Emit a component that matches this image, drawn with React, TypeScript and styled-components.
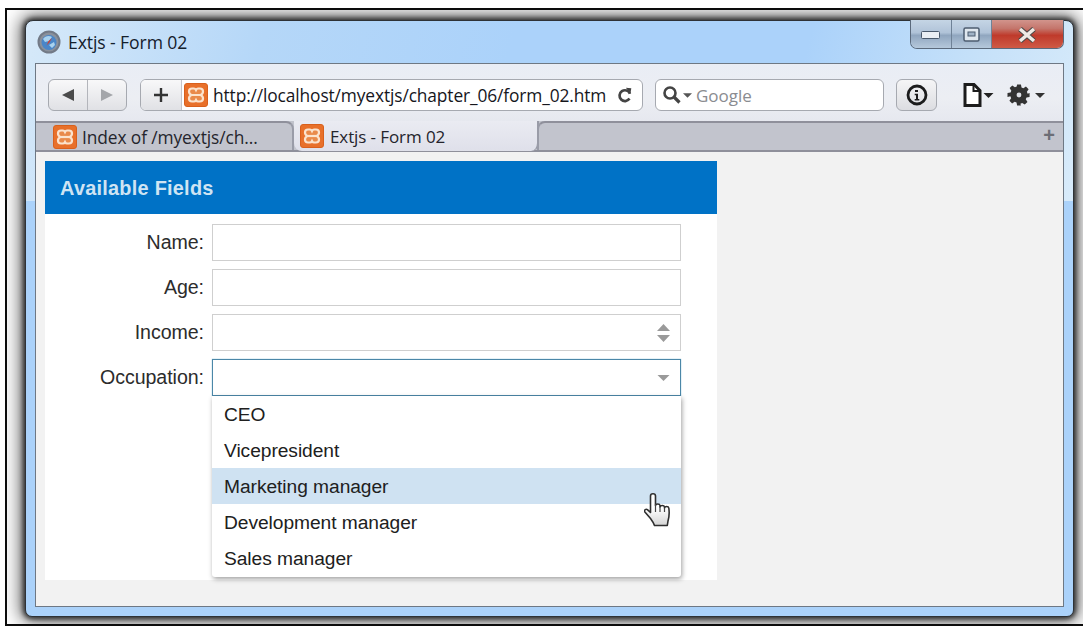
import React from 'react';
import styled, { createGlobalStyle } from 'styled-components';

const Global = createGlobalStyle`
  html, body { margin: 0; padding: 0; background: #fff; width: 1091px; height: 634px; overflow: hidden; }
  * { box-sizing: border-box; }
`;

const Shot = styled.div`
  width: 1091px; height: 634px; padding: 8px 8px 8px 5px; background: #fff;
`;
const Frame = styled.div`
  position: relative; width: 1078px; height: 618px; overflow: hidden;
  border: solid #0c0c0c; border-width: 2px 0 2px 2px;
  background: #fff;
  padding: 10px 10px 7px 18px;
`;
const Win = styled.div`
  width: 1049px; height: 597px; display: flex; flex-direction: column;
  border: 1px solid #2e3236; border-radius: 8px 8px 7px 7px;
  background: linear-gradient(105deg,#d6e9f9 0,#b5d7f8 22%,#abd2fa 45%,#abd2fa 72%,#c6e1f9 88%,#d8ebfa 100%) 0 0 / 100% 180px no-repeat, #abd2fa;
  box-shadow: 0 0 5px 2px rgba(20,20,20,.8), 0 0 18px 5px rgba(0,0,0,.6);
  padding: 0 9px 9px 9px;
`;
const TitleBar = styled.div`
  position: relative; height: 42px; flex: none; display: flex; align-items: center; gap: 7px; padding: 0 0 0 2px;
  font: 17.6px "Open Sans", sans-serif; color: #14202c; letter-spacing: -.1px;
`;
const Caption = styled.div`
  position: absolute; right: 0; top: -1px; height: 29px; width: 154px; display: flex;
  border: 1px solid #5b6a7c; border-top: 0; border-radius: 0 0 7px 7px; overflow: hidden;
`;
const CapBtn = styled.div<{ $w: number; $red?: boolean }>`
  width: ${p => p.$w}px; display: flex; align-items: center; justify-content: center; padding-top: 1px;
  border-right: 1px solid #6f8297;
  background: ${p => p.$red
    ? 'linear-gradient(#d2948c 0,#c4766c 30%,#bf3a2b 55%,#cf5a45 100%)'
    : 'linear-gradient(#c5d5e5 0,#b0c3d8 45%,#90a6bf 55%,#b5c8db 100%)'};
  &:last-child { border-right: 0; }
`;
const Inner = styled.div`
  flex: 1; display: flex; flex-direction: column; min-height: 0; border: 1px solid #6e7884; background: #f2f2f2;
`;
const Toolbar = styled.div`
  height: 57px; flex: none; display: flex; align-items: center; padding: 5px 0 0 12px;
  background: linear-gradient(#e9edf5,#eceef3 60%,#e6e8ef);
`;
const Seg = styled.div`
  height: 32px; display: flex; flex: none; border: 1px solid #a6a9b0; border-radius: 6px; overflow: hidden;
  background: linear-gradient(#f8f8f9,#e0e1e5);
`;
const NavCell = styled.div<{ $w: number }>`
  width: ${p => p.$w}px; display: flex; align-items: center; justify-content: center;
  border-right: 1px solid #b3b5bb; &:last-child { border-right: 0; }
`;
const UrlBar = styled.div`
  margin-left: 13px; width: 503px; height: 32px; flex: none; display: flex; align-items: center;
  border: 1px solid #a6a9b0; border-radius: 6px; overflow: hidden; background: #fff;
`;
const PlusCell = styled.div`
  width: 41px; height: 100%; display: flex; align-items: center; justify-content: center; flex: none;
  background: linear-gradient(#f8f8f9,#e0e1e5); border-right: 1px solid #c4c6cb;
`;
const LogoSlot = styled.span`
  margin-left: 2px; display: flex;
`;
const UrlText = styled.span`
  margin-left: 5px; flex: 1; font: 17.35px "Open Sans", sans-serif; color: #16161c; white-space: nowrap; letter-spacing: -.12px;
`;
const Search = styled.div`
  margin-left: 12px; width: 229px; height: 32px; flex: none; display: flex; align-items: center; padding-left: 6px;
  border: 1px solid #a6a9b0; border-radius: 6px; background: #fff;
  font: 17px "Open Sans", sans-serif; color: #8a8c90;
`;
const SearchCaret = styled.span`
  margin: 0 4px 0 1px; display: flex;
`;
const InfoBtn = styled.div`
  margin-left: 12px; width: 41px; height: 32px; flex: none; display: flex; align-items: center; justify-content: center;
  border: 1px solid #a6a9b0; border-radius: 6px; background: linear-gradient(#f5f5f6,#dcdde1);
`;
const ToolIcons = styled.div`
  margin-left: 26px; display: flex; align-items: center; gap: 13px;
`;
const ToolGroup = styled.span<{ $gap: number }>`
  display: flex; align-items: center; gap: ${p => p.$gap}px;
`;
const TabStrip = styled.div`
  height: 31px; flex: none; display: flex; background: #c2c4cd; border-bottom: 2px solid #8f909b; position: relative;
`;
const Tab = styled.div<{ $active?: boolean; $w: number }>`
  width: ${p => p.$w}px; flex: none; display: flex; align-items: center; gap: ${p => p.$active ? 6 : 5}px; padding: 0 0 0 ${p => p.$active ? 6 : 17}px;
  font: ${p => p.$active ? 17 : 17.35}px "Open Sans", sans-serif; color: #24242c; white-space: nowrap; letter-spacing: -.1px;
  ${p => p.$active
    ? 'background: linear-gradient(#eaebf2,#dfe0ea); margin-bottom: -1px; border-right: 2px solid #9a9ca8; border-radius: 0 0 8px 8px;'
    : 'background: #c2c4cd; border-top: 2px solid #8f909b; border-right: 2px solid #9a9ca8; border-top-right-radius: 8px;'}
`;
const TabRest = styled.div`
  flex: 1; border-top: 2px solid #8f909b; border-left: 2px solid #9a9ca8; border-top-left-radius: 8px; margin-left: -2px;
`;
const NewTab = styled.div`
  position: absolute; right: 8px; top: 4px; color: #6c6e76; font: bold 20px "Liberation Sans", sans-serif; line-height: 20px;
`;
const Content = styled.div`
  flex: 1; padding: 9px 0 0 9px;
`;
const Panel = styled.div`
  position: relative; width: 672px; height: 419px; background: #fff;
`;
const Header = styled.div`
  height: 53px; display: flex; align-items: center; padding: 1px 0 0 15px; background: #0072c6;
  font: bold 19.9px "Liberation Sans", sans-serif; color: #cfe4f3; letter-spacing: .25px;
`;
const Form = styled.div`
  padding: 10px 0 0 0; display: flex; flex-direction: column; gap: 8px;
`;
const Row = styled.div`
  height: 37px; display: flex; align-items: center;
`;
const Label = styled.label`
  width: 159px; text-align: right; flex: none; font: 19.6px "Liberation Sans", sans-serif; color: #2c2c2c; letter-spacing: -.05px;
`;
const Field = styled.div<{ $focus?: boolean }>`
  margin-left: 8px; width: 469px; height: 37px; flex: none; display: flex; align-items: center; justify-content: flex-end;
  padding-right: 10px; background: #fff;
  border: 1px solid ${p => p.$focus ? '#4b87a8' : '#cfcfcf'}; ${p => p.$focus ? 'box-shadow: 0 0 1px #6ab0cf;' : ''}
`;
const Menu = styled.div`
  position: absolute; left: 167px; top: 235px; width: 469px; height: 181px; background: #fff;
  box-shadow: 1px 2px 5px rgba(0,0,0,.38); border-radius: 0 0 3px 3px; overflow: hidden;
`;
const Item = styled.div<{ $on?: boolean }>`
  height: 36px; display: flex; align-items: center; padding: 2px 0 0 12px;
  font: 19.2px "Liberation Sans", sans-serif; color: #202020; letter-spacing: -.05px;
  background: ${p => p.$on ? '#cfe2f2' : 'transparent'};
`;
const Cursor = styled.div`
  position: absolute; left: 599px; top: 331px; width: 28px; height: 36px;
`;

const Xampp = ({ s = 24 }: { s?: number }) => (
  <svg width={s} height={s} viewBox="0 0 24 24" style={{ flex: 'none' }}>
    <rect x=".5" y=".5" width="23" height="23" rx="2.5" fill="#e8702a" stroke="#d9601c" />
    <path d="M8 5.500h2c1 0 1.600.8 2 1.600.4-.8 1-1.600 2-1.600h2c2 0 3 1.500 3 3 0 1.700-1 3-2.500 3.500 1.500.5 2.500 1.800 2.500 3.500 0 1.500-1 3-3 3h-2c-1 0-1.600-.8-2-1.600-.4.8-1 1.600-2 1.600H8c-2 0-3-1.500-3-3 0-1.700 1-3 2.500-3.500C6 11.500 5 10.200 5 8.500c0-1.500 1-3 3-3z" fill="#e98a4a" stroke="#fbe3cd" strokeWidth="2.200" />
    <path d="M8 12h8" stroke="#fbe3cd" strokeWidth="2.200" />
  </svg>
);

const Globe = () => (
  <svg width="24" height="24" viewBox="0 0 24 24" style={{ flex: 'none' }}>
    <circle cx="12" cy="12" r="10.500" fill="#8a919c" stroke="#727a87" strokeWidth="2" />
    <circle cx="12" cy="12.500" r="7.500" fill="#4a86c8" />
    <path d="M6 9c2-3 6-4 9-2l-3 4-4 1zM12 15l5-3 1 3-3 3z" fill="#a9d2ee" />
    <path d="M15 8l-2.500 4.500-3 3 2-4.500z" fill="#c9453a" />
  </svg>
);

const Arrow = ({ dir, color }: { dir: 'l' | 'r'; color: string }) => (
  <svg width="14" height="14" viewBox="0 0 14 14">
    <path d={dir === 'l' ? 'M1 7 13 1v12z' : 'M13 7 1 1v12z'} fill={color} />
  </svg>
);

const Caret = ({ c = '#333', w = 10, h = 5 }: { c?: string; w?: number; h?: number }) => (
  <svg width={w} height={h} viewBox="0 0 10 5" style={{ flex: 'none' }}><path d="M0 0h10L5 5z" fill={c} /></svg>
);

const Hand = () => (
  <svg width="28" height="36" viewBox="0 0 28 36">
    <defs><linearGradient id="hg" x1="0" y1="0" x2="0" y2="1"><stop offset=".45" stopColor="#fff" /><stop offset="1" stopColor="#d4d4d4" /></linearGradient></defs>
    <path d="M6.500 4c0-3 5-3 5 0v9.500c.3-2 4.300-2 4.500 0v1.500c.3-2 4.200-2 4.500 0v1c.3-2 4-2 4.300 0 .6 4 .4 9-.8 13l-.7 4.500H10.500c-.8-3-2.500-5-4-7L.9 20c-1.200-1.700 1-3.500 2.500-2.300L6.500 20.500z"
      fill="url(#hg)" stroke="#2f2f2f" strokeWidth="1.600" strokeLinejoin="round" />
    <path d="M11.500 12v8M16 15v5M20.500 16v4" stroke="#444" strokeWidth="1.200" />
  </svg>
);

const Gear = () => (
  <svg width="24" height="24" viewBox="0 0 24 24" style={{ flex: 'none' }}>
    <path d="M10 1h4l.6 3.200 1.900.8 2.700-1.800 2.800 2.800-1.800 2.700.8 1.900L23 10v4l-3.200.6-.8 1.900 1.800 2.700-2.800 2.800-2.700-1.800-1.900.8L14 23h-4l-.6-3.200-1.900-.8-2.700 1.800-2.800-2.800 1.800-2.700-.8-1.900L0 14v-4l3.200-.6.8-1.900-1.800-2.700L5 2l2.700 1.800 1.900-.8z" fill="#333" transform="translate(.5 .5) scale(.96)" />
    <circle cx="12" cy="12" r="2.400" fill="#dfe1e7" />
  </svg>
);

const items = ['CEO', 'Vicepresident', 'Marketing manager', 'Development manager', 'Sales manager'];

export default function App() {
  return (
    <Shot>
      <Global />
      <Frame>
        <Win>
          <TitleBar>
            <Globe />
            <span>Extjs - Form 02</span>
            <Caption>
              <CapBtn $w={42}>
                <svg width="22" height="10" viewBox="0 0 22 10"><rect x="1.500" y="1.500" width="18" height="7" rx="1" fill="#e9eef4" stroke="#48586c" /></svg>
              </CapBtn>
              <CapBtn $w={40}>
                <svg width="18" height="16" viewBox="0 0 18 16"><rect x="1" y="1" width="15" height="13" rx="1.500" fill="#dfe7ef" stroke="#4d5d70" strokeWidth="1.500" /><rect x="5" y="5" width="7" height="4" fill="#9fb2c6" stroke="#4d5d70" /></svg>
              </CapBtn>
              <CapBtn $w={72} $red>
                <svg width="22" height="16" viewBox="0 0 22 16"><path d="M4 2l14 12M18 2 4 14" stroke="#4c4a48" strokeWidth="5.500" /><path d="M4 2l14 12M18 2 4 14" stroke="#efeae4" strokeWidth="3.500" /></svg>
              </CapBtn>
            </Caption>
          </TitleBar>
          <Inner>
            <Toolbar>
              <Seg>
                <NavCell $w={39}><Arrow dir="l" color="#4b4b4b" /></NavCell>
                <NavCell $w={38}><Arrow dir="r" color="#a4a6aa" /></NavCell>
              </Seg>
              <UrlBar>
                <PlusCell>
                  <svg width="16" height="16" viewBox="0 0 16 16"><path d="M8 1v14M1 8h14" stroke="#333" strokeWidth="2.400" /></svg>
                </PlusCell>
                <LogoSlot><Xampp /></LogoSlot>
                <UrlText>http://localhost/myextjs/chapter_06/form_02.htm</UrlText>
                <svg width="18" height="18" viewBox="0 0 20 20" style={{ flex: 'none', marginRight: 8 }}>
                  <path d="M15.500 8.500A6 6 0 1 0 15 14" fill="none" stroke="#444" strokeWidth="3" />
                  <path d="M11 2l6 .5-1 6.500z" fill="#444" />
                </svg>
              </UrlBar>
              <Search>
                <svg width="20" height="20" viewBox="0 0 20 20" style={{ flex: 'none' }}>
                  <circle cx="8" cy="8" r="5.500" fill="none" stroke="#444" strokeWidth="2.600" />
                  <path d="M12 12l5.500 5.500" stroke="#444" strokeWidth="3.200" />
                </svg>
                <SearchCaret><Caret c="#555" w={9} h={5} /></SearchCaret>
                Google
              </Search>
              <InfoBtn>
                <svg width="22" height="22" viewBox="0 0 22 22">
                  <circle cx="11" cy="11" r="9" fill="none" stroke="#1c1c1c" strokeWidth="2.800" />
                  <path d="M9 6h3v2H9zM8.700 9.800h3.300v5.200h1.300v1.500H8.700V15H10v-3.700H8.700z" fill="#1c1c1c" />
                </svg>
              </InfoBtn>
              <ToolIcons>
                <ToolGroup $gap={1}>
                  <svg width="19" height="24" viewBox="0 0 18 24" style={{ flex: 'none' }}>
                    <path d="M1.500 1.500h9l6 6v15h-15z" fill="#fff" stroke="#1c1c1c" strokeWidth="3" />
                    <path d="M10 2v6h6" fill="none" stroke="#1c1c1c" strokeWidth="2" />
                  </svg>
                  <Caret c="#222" w={11} h={5} />
                </ToolGroup>
                <ToolGroup $gap={4}>
                  <Gear />
                  <Caret c="#333" />
                </ToolGroup>
              </ToolIcons>
            </Toolbar>
            <TabStrip>
              <Tab $w={258}>
                <Xampp s={24} />
                <span>Index of /myextjs/ch...</span>
              </Tab>
              <Tab $active $w={245}>
                <Xampp s={24} />
                <span>Extjs - Form 02</span>
              </Tab>
              <TabRest />
              <NewTab>+</NewTab>
            </TabStrip>
            <Content>
              <Panel>
                <Header>Available Fields</Header>
                <Form>
                  <Row><Label>Name:</Label><Field /></Row>
                  <Row><Label>Age:</Label><Field /></Row>
                  <Row>
                    <Label>Income:</Label>
                    <Field>
                      <svg width="13" height="20" viewBox="0 0 13 20"><path d="M6.500 1 13 8H0zM0 12h13l-6.500 7z" fill="#9a9a9a" /></svg>
                    </Field>
                  </Row>
                  <Row>
                    <Label>Occupation:</Label>
                    <Field $focus><Caret c="#9a9a9a" w={13} h={6} /></Field>
                  </Row>
                </Form>
                <Menu>
                  {items.map(t => <Item key={t} $on={t === 'Marketing manager'}>{t}</Item>)}
                </Menu>
                <Cursor><Hand /></Cursor>
              </Panel>
            </Content>
          </Inner>
        </Win>
      </Frame>
    </Shot>
  );
}
